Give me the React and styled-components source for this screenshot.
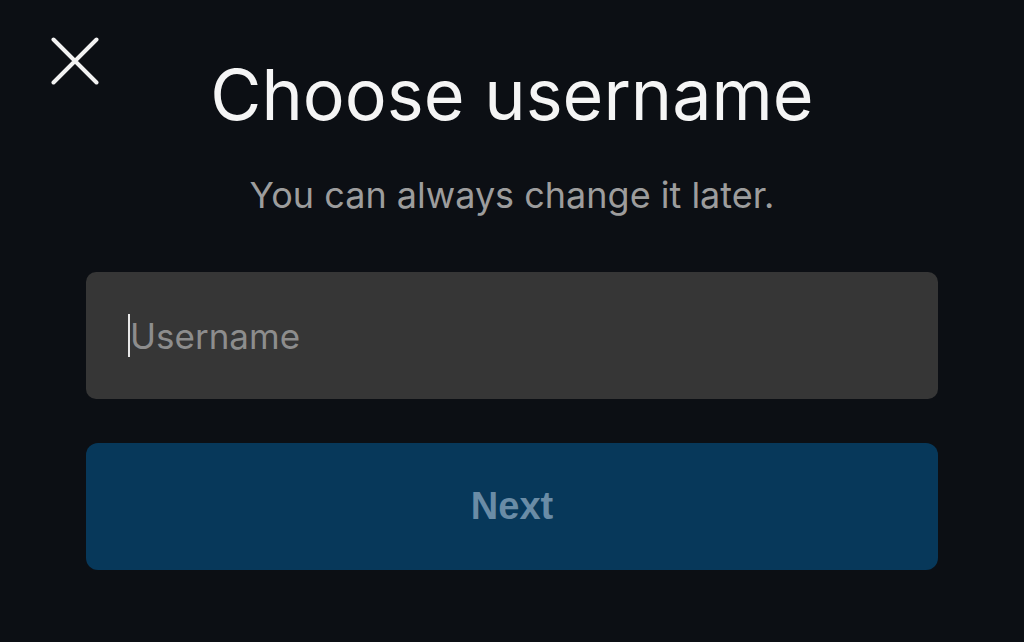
import React from 'react'
import styled, { createGlobalStyle } from 'styled-components'

const GlobalStyle = createGlobalStyle`
  html, body {
    margin: 0;
    padding: 0;
    background: #0c0f14;
  }
  body {
    font-family: Inter, "Noto Sans", sans-serif;
    -webkit-font-smoothing: antialiased;
  }
`

const Screen = styled.div`
  display: flex;
  flex-direction: column;
  min-height: 642px;
  background: #0c0f14;
  color: #f5f5f5;
`

const Header = styled.div`
  display: grid;
  grid-template-columns: 1fr auto 1fr;
  align-items: start;
  padding: 36px 0 0 0;
`

const CloseButton = styled.button`
  justify-self: start;
  display: flex;
  align-items: center;
  justify-content: center;
  width: 50px;
  height: 50px;
  margin-left: 50px;
  padding: 0;
  border: none;
  background: transparent;
  color: #f2f2f2;
  cursor: pointer;
`

const Title = styled.h1`
  margin: 24px 0 0 0;
  font-family: Inter, sans-serif;
  font-size: 70px;
  font-weight: 400;
  line-height: 1;
  color: #f5f5f5;
  white-space: nowrap;
`

const Subtitle = styled.p`
  margin: 47px 0 0 0;
  text-align: center;
  font-size: 36px;
  line-height: 1;
  color: #9d9d9d;
`

const Form = styled.div`
  display: flex;
  flex-direction: column;
  gap: 44px;
  padding: 0 86px;
  margin-top: 59px;
`

const Field = styled.label`
  display: flex;
  align-items: center;
  height: 127px;
  padding: 0 0 0 42px;
  border-radius: 10px;
  background: #363636;
  box-sizing: border-box;
`

const Caret = styled.span`
  width: 2px;
  height: 43px;
  background: #e8e8e8;
  flex: none;
`

const Input = styled.input`
  flex: 1;
  min-width: 0;
  border: none;
  outline: none;
  background: transparent;
  padding: 0;
  font-family: Inter, sans-serif;
  font-size: 35px;
  color: #f0f0f0;
  caret-color: transparent;

  &::placeholder {
    color: #8d8d8d;
  }
`

const NextButton = styled.button`
  height: 127px;
  border: none;
  border-radius: 12px;
  background: ${p => (p.disabled ? '#07385a' : '#0a66c2')};
  color: ${p => (p.disabled ? '#6a8ca6' : '#ffffff')};
  font-family: "Liberation Sans", Arial, sans-serif;
  font-size: 38px;
  font-weight: 700;
  cursor: pointer;
`

const CloseIcon = () => (
  <svg width="48" height="48" viewBox="0 0 48 48" fill="none">
    <path d="M2.5 2.5L45.5 45.5M45.5 2.5L2.5 45.5" stroke="currentColor" strokeWidth="4" strokeLinecap="round" />
  </svg>
)

export default function App() {
  return (
    <Screen>
      <GlobalStyle />
      <Header>
        <CloseButton aria-label="Close">
          <CloseIcon />
        </CloseButton>
        <Title>Choose username</Title>
        <div />
      </Header>
      <Subtitle>You can always change it later.</Subtitle>
      <Form>
        <Field>
          <Caret />
          <Input placeholder="Username" />
        </Field>
        <NextButton disabled>Next</NextButton>
      </Form>
    </Screen>
  )
}
